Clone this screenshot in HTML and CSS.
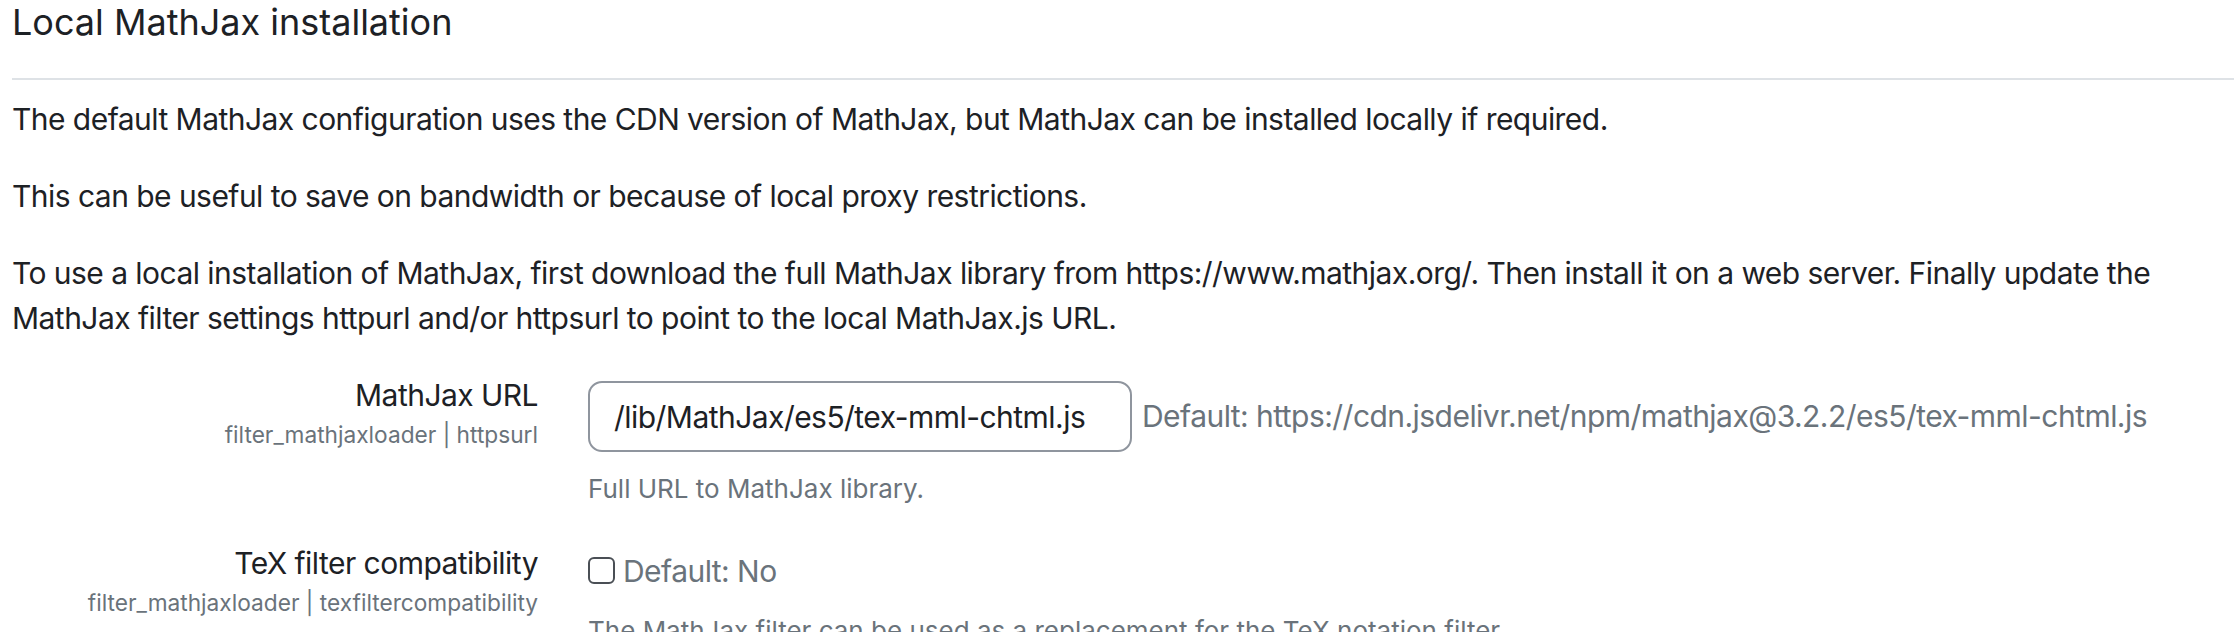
FILE: index.html
```html
<!DOCTYPE html>
<html lang="en">
<head>
  <meta charset="UTF-8" />
  <title>Local MathJax installation</title>
  <link rel="stylesheet" href="styles.css">
</head>
<body>
  <div class="page">
    <!-- Section heading -->
    <h3 class="section-heading">Local MathJax installation</h3>

    <div class="section-info">
      <p>The default MathJax configuration uses the CDN version of MathJax, but MathJax can be installed locally if required.</p>
      <p>This can be useful to save on bandwidth or because of local proxy restrictions.</p>
      <p>To use a local installation of MathJax, first download the full MathJax library from https://www.mathjax.org/. Then install it on a web server. Finally update the MathJax filter settings httpurl and/or httpsurl to point to the local MathJax.js URL.</p>
    </div>

    <!-- MathJax URL -->
    <div class="setting">
      <div class="setting-label">
        <label for="httpsurl">MathJax URL</label>
        <span class="shortname">filter_mathjaxloader | httpsurl</span>
      </div>
      <div class="setting-control">
        <div class="control-row">
          <input type="text" id="httpsurl" class="text-input" value="/lib/MathJax/es5/tex-mml-chtml.js" />
          <span class="default-info">Default: https://cdn.jsdelivr.net/npm/mathjax@3.2.2/es5/tex-mml-chtml.js</span>
        </div>
        <div class="setting-desc">Full URL to MathJax library.</div>
      </div>
    </div>

    <!-- TeX filter compatibility -->
    <div class="setting">
      <div class="setting-label">
        <label for="texfiltercompatibility">TeX filter compatibility</label>
        <span class="shortname">filter_mathjaxloader | texfiltercompatibility</span>
      </div>
      <div class="setting-control">
        <div class="control-row">
          <input type="checkbox" id="texfiltercompatibility" class="check" />
          <span class="default-info">Default: No</span>
        </div>
        <div class="setting-desc">The MathJax filter can be used as a replacement for the TeX notation filter.</div>
      </div>
    </div>
  </div>
</body>
</html>
```

FILE: styles.css
```css
:root {
  --text-color: #1d2125;
  --muted-color: #6a737b;
  --line-color: #dee2e6;
  --input-border: #8f959e;
}
html {
  overflow: hidden;
}
body {
  margin: 0;
  font-family: Inter, "Noto Sans", sans-serif;
  font-size: 30px;
  line-height: 45px;
  letter-spacing: -0.018em;
  color: var(--text-color);
  background: #fff;
}
.page {
  padding: 0 0 0 12px;
}
/* Heading with rule underneath */
.section-heading {
  margin: 0;
  padding: 1px 0 35px;
  font-size: 36px;
  font-weight: 400;
  line-height: 42px;
  letter-spacing: 0;
  border-bottom: 2px solid var(--line-color);
}
.section-info {
  padding: 17px 12px 0 0;
}
.section-info p {
  margin: 0 0 32px;
}
/* Setting rows */
.setting {
  display: grid;
  grid-template-columns: 526px 1fr;
  column-gap: 50px;
  margin-bottom: 33px;
}
.setting-label {
  display: flex;
  flex-direction: column;
  align-items: flex-end;
  text-align: right;
}
.setting-label label {
  font-size: 30px;
  line-height: 45px;
}
.shortname {
  font-size: 22.7px;
  line-height: 33px;
  letter-spacing: 0;
  color: var(--muted-color);
}
.setting-control {
  padding-top: 8px;
}
.control-row {
  display: flex;
  align-items: center;
  gap: 10px;
}
.text-input {
  width: 544px;
  height: 71px;
  box-sizing: border-box;
  padding: 0 24px;
  border: 2px solid var(--input-border);
  border-radius: 14px;
  font-family: inherit;
  font-size: 30px;
  letter-spacing: inherit;
  color: var(--text-color);
  background: #fff;
}
.default-info {
  color: var(--muted-color);
  font-size: 30px;
  line-height: 45px;
}
.check {
  appearance: none;
  width: 27px;
  height: 27px;
  margin: -2px -2px 0 0;
  box-sizing: border-box;
  border: 2px solid #4a4f55;
  border-radius: 6px;
  background: #fff;
}
.setting-desc {
  margin-top: 17px;
  font-size: 26px;
  line-height: 39px;
  letter-spacing: 0;
  color: var(--muted-color);
}
```
